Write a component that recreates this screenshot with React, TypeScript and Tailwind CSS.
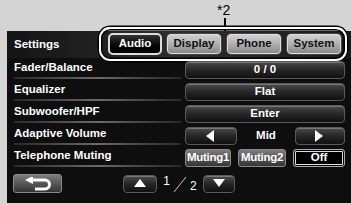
const FONT = { fontFamily: '"Liberation Sans", Arial, sans-serif' }

const ROWS = [
  { label: 'Fader/Balance', kind: 'button', value: '0 / 0' },
  { label: 'Equalizer', kind: 'button', value: 'Flat' },
  { label: 'Subwoofer/HPF', kind: 'button', value: 'Enter' },
  { label: 'Adaptive Volume', kind: 'stepper', value: 'Mid' },
  { label: 'Telephone Muting', kind: 'muting', value: '' },
]

const TABS = ['Audio', 'Display', 'Phone', 'System']

const darkBtn =
  'flex items-center justify-center h-[18px] rounded-[4px] border border-[#5a5a5a] bg-gradient-to-b from-[#4c4c4c] via-[#262626] to-[#111] text-white font-bold text-[11.5px] shadow-[inset_0_1px_0_#777]'
const greyBtn =
  'flex items-center justify-center h-[18px] rounded-[3px] border border-[#8a8a8a] bg-gradient-to-b from-[#7c7c7c] via-[#575757] to-[#353535] text-white font-bold text-[11.5px]'

function Tri({ dir }: { dir: 'left' | 'right' | 'up' | 'down' }) {
  const pts = {
    left: '10,1 10,13 2,7',
    right: '2,1 2,13 10,7',
    up: '1,10 13,10 7,2',
    down: '1,2 13,2 7,10',
  }[dir]
  return (
    <svg width="14" height="14" viewBox="0 0 14 14">
      <polygon points={pts} fill="#fff" />
    </svg>
  )
}

export default function App() {
  return (
    <div className="w-[351px] h-[203px] bg-[#d4d4d4] flex flex-col overflow-hidden" style={FONT}>
      {/* annotation */}
      <div className="h-[31px] flex flex-col items-start pl-[217px] pt-[3px]">
        <div className="text-[14px] leading-[15px] text-black">*2</div>
        <div className="ml-[7px] w-[2px] h-[13px] bg-black" />
      </div>

      <div className="flex-1 ml-[7px] bg-[#0e0e0e] flex flex-col">
        {/* header */}
        <div className="h-[27px] flex items-center bg-gradient-to-r from-[#141414] via-[#2e2e2e] to-[#1a1a1a]">
          <div className="w-[92px] pl-[7px] text-white font-bold text-[11.5px]">Settings</div>
          <div className="-mt-[2px] h-[34px] w-[248px] rounded-[11px] border-2 border-white shadow-[0_0_0_1.5px_#000,inset_0_0_0_1.5px_#000] flex items-center gap-[4px] pl-[7px] pr-[2px]">
            {TABS.map((t, i) => (
              <div
                key={t}
                className={
                  i === 0
                    ? 'h-[22px] w-[54px] rounded-[5px] border-2 border-[#ddd] bg-gradient-to-b from-[#333] via-[#0c0c0c] to-[#000] text-white font-bold text-[11.5px] flex items-center justify-center'
                    : 'h-[22px] w-[56px] rounded-[5px] border border-[#444] bg-gradient-to-b from-[#d4d4d4] via-[#b0b0b0] to-[#858585] text-[#111] font-bold text-[11.5px] flex items-center justify-center shadow-[inset_0_0_0_1px_#ddd]'
                }
              >
                {t}
              </div>
            ))}
          </div>
        </div>

        {/* rows */}
        <div className="flex flex-col pt-[1px]">
          {ROWS.map((r) => (
            <div key={r.label} className="h-[22px] flex items-center">
              <div className="w-[174px] h-full pl-[7px] flex flex-col justify-end">
                <div className="text-white font-bold text-[11.5px] leading-[14px]">{r.label}</div>
                <div className="mt-[3px] mb-[2px] h-[2px] bg-gradient-to-r from-[#2a2a2a] via-[#6a6a6a] to-[#2a2a2a]" />
              </div>
              <div className="flex-1 pl-[4px] pr-[6px] flex items-center">
                {r.kind === 'button' && <div className={`${darkBtn} w-full`}>{r.value}</div>}
                {r.kind === 'stepper' && (
                  <div className="w-full flex items-center">
                    <div className={`${darkBtn} w-[52px]`}>
                      <Tri dir="left" />
                    </div>
                    <div className="flex-1 text-center text-white font-bold text-[11.5px]">{r.value}</div>
                    <div className={`${darkBtn} w-[50px]`}>
                      <Tri dir="right" />
                    </div>
                  </div>
                )}
                {r.kind === 'muting' && (
                  <div className="w-full flex items-center gap-[7px]">
                    <div className={`${greyBtn} w-[46px] tracking-tight`}>Muting1</div>
                    <div className={`${greyBtn} w-[48px] tracking-tight`}>Muting2</div>
                    <div className="flex-1 h-[18px] rounded-[3px] border border-[#aaa] bg-black shadow-[inset_0_0_0_1px_#000,inset_0_0_0_2px_#ddd] text-white font-bold text-[11.5px] flex items-center justify-center">
                      Off
                    </div>
                  </div>
                )}
              </div>
            </div>
          ))}
        </div>

        {/* bottom bar */}
        <div className="mt-[5px] flex items-center h-[19px]">
          <div className={`${greyBtn} ml-[6px] w-[49px] h-[19px]`}>
            <svg width="30" height="14" viewBox="0 0 30 14">
              <path d="M10 3 H22 A4.5 4.5 0 0 1 22 12 H12" fill="none" stroke="#fff" strokeWidth="3" />
              <polygon points="2,3 10,-1 10,7" fill="#fff" />
            </svg>
          </div>
          <div className={`${darkBtn} ml-[61px] w-[34px] h-[17px]`}>
            <Tri dir="up" />
          </div>
          <div className="w-[46px] h-[19px] flex items-center justify-center text-white text-[12px] gap-[1px]">
            <span className="-mt-[6px]">1</span>
            <svg width="18" height="18" viewBox="0 0 18 18">
              <line x1="3" y1="17" x2="15" y2="2" stroke="#ccc" strokeWidth="1" />
            </svg>
            <span className="mt-[4px]">2</span>
          </div>
          <div className={`${darkBtn} w-[32px] h-[17px]`}>
            <Tri dir="down" />
          </div>
        </div>
      </div>
    </div>
  )
}
